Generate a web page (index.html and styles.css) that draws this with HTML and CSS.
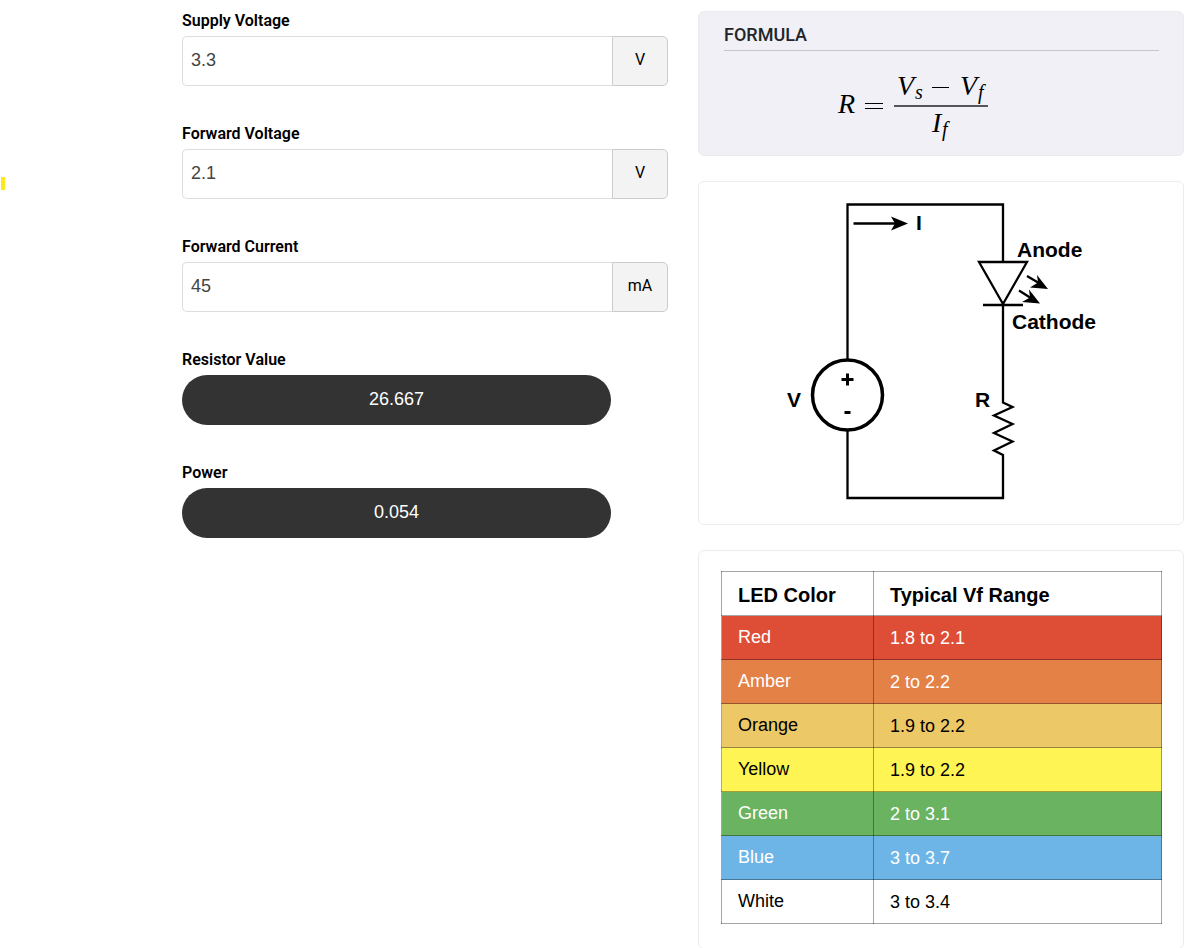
FILE: index.html
```
<!DOCTYPE html>
<html lang="en">
<head>
<meta charset="utf-8">
<title>LED Resistor Calculator</title>
<link rel="stylesheet" href="styles.css">
</head>
<body>
<main class="page">
  <aside class="margin"><span class="marker"></span></aside>
  <form class="calculator">
    <div class="field">
      <label class="label" for="supply">Supply Voltage</label>
      <div class="group"><input class="input" id="supply" type="text" value="3.3"><span class="unit">V</span></div>
    </div>
    <div class="field">
      <label class="label" for="forward">Forward Voltage</label>
      <div class="group"><input class="input" id="forward" type="text" value="2.1"><span class="unit">V</span></div>
    </div>
    <div class="field">
      <label class="label" for="current">Forward Current</label>
      <div class="group"><input class="input" id="current" type="text" value="45"><span class="unit">mA</span></div>
    </div>
    <div class="field">
      <label class="label" for="resistor">Resistor Value</label>
      <input class="result" id="resistor" type="text" value="26.667" readonly>
    </div>
    <div class="field">
      <label class="label" for="power">Power</label>
      <input class="result" id="power" type="text" value="0.054" readonly>
    </div>
  </form>
  <div class="reference">
    <section class="card formula">
      <h2 class="heading">FORMULA</h2>
      <svg class="equation" viewBox="0 0 160 80" width="160" height="80" role="img" aria-label="R equals Vs minus Vf over If">
        <g class="symbol">
          <text x="8" y="51">R</text>
          <text x="67" y="33">V</text>
          <text x="130" y="33">V</text>
          <text x="102" y="70">I</text>
        </g>
        <g class="subscript">
          <text x="85" y="37">s</text>
          <text x="148" y="37">f</text>
          <text x="112" y="74">f</text>
        </g>
        <path d="M35 41.500h18M35 46.500h18M102 25.500h17" stroke="#000" stroke-width="1.200"/>
        <path d="M64 44h94" stroke="#55555c" stroke-width="2"/>
      </svg>
    </section>
    <section class="card circuit">
      <svg class="diagram" viewBox="0 1 484 342" width="484" height="342" role="img" aria-label="LED circuit with supply and series resistor">
        <g fill="none" stroke="#000" stroke-width="2.300">
          <path d="M148.500 178V23.500H304V81M304 124V221.500L313.500 226L295 234.500L313.500 243L295 252L313.500 260.500L295 269.500L304 274V317H148.500V250"/>
          <path d="M280 81H328L304 123ZM284 124H324"/>
          <path d="M154.500 42.500H197M328 95L339 101.500M320 109.500L331 116.500"/>
          <circle cx="148.500" cy="214" r="35" stroke-width="3.500"/>
        </g>
        <path d="M209 42.500L192 35.500L196 42.500L192 49.500ZM349 108L338 94L339 101.500L331 106.500ZM341 122.500L330 108.500L331 116.500L323 121Z"/>
        <path d="M142.500 196.900h12v3h-12zM147 192.400h3v12h-3zM145.500 230h6v3h-6z"/>
        <g class="legend">
          <text x="217" y="49">I</text>
          <text x="318" y="76">Anode</text>
          <text x="313" y="148">Cathode</text>
          <text x="88" y="226">V</text>
          <text x="276" y="226">R</text>
        </g>
      </svg>
    </section>
    <section class="card chart">
      <table class="colors">
        <thead><tr><th>LED Color</th><th>Typical Vf Range</th></tr></thead>
        <tbody>
          <tr class="red"><td>Red</td><td>1.8 to 2.1</td></tr>
          <tr class="amber"><td>Amber</td><td>2 to 2.2</td></tr>
          <tr class="orange"><td>Orange</td><td>1.9 to 2.2</td></tr>
          <tr class="yellow"><td>Yellow</td><td>1.9 to 2.2</td></tr>
          <tr class="green"><td>Green</td><td>2 to 3.1</td></tr>
          <tr class="blue"><td>Blue</td><td>3 to 3.7</td></tr>
          <tr><td>White</td><td>3 to 3.4</td></tr>
        </tbody>
      </table>
    </section>
  </div>
</main>
</body>
</html>
```
FILE: styles.css
```
* { box-sizing: border-box; }

body {
  margin: 0;
  background: #fff;
  color: #000;
  font-family: Roboto, "Liberation Sans", sans-serif;
}

.page {
  display: grid;
  grid-template-columns: 152px minmax(0, 1fr) minmax(0, 1fr);
  column-gap: 30px;
}

.margin { padding: 177px 0 0 1px; }

.marker {
  display: block;
  width: 4px;
  height: 13px;
  background: #fbe91c;
}

.calculator {
  display: flex;
  flex-direction: column;
  gap: 35px;
  padding-top: 8px;
}

.field {
  display: flex;
  flex-direction: column;
  gap: 3px;
}

.label {
  font-size: 16px;
  font-weight: 600;
  line-height: 25px;
}

.group { display: flex; height: 50px; }

.input {
  flex: 1;
  min-width: 0;
  padding: 0 8px 2px;
  border: 1px solid #ddd;
  border-right: 0;
  border-radius: 5px 0 0 5px;
  color: #444;
  font-family: "Liberation Sans", Arial, sans-serif;
  font-size: 18px;
}

.unit {
  width: 56px;
  border: 1px solid #ccc;
  border-radius: 0 5px 5px 0;
  background: #f3f3f3;
  font-size: 16px;
  line-height: 46px;
  text-align: center;
}

.result {
  height: 50px;
  margin-right: 57px;
  padding: 0 0 2px;
  border: 0;
  border-radius: 25px;
  background: #333;
  color: #fff;
  font-family: "Liberation Sans", Arial, sans-serif;
  font-size: 18px;
  text-align: center;
}

.reference {
  display: flex;
  flex-direction: column;
  gap: 25px;
  padding-top: 11px;
}

.card {
  border: 1px solid #ececee;
  border-radius: 6px;
}

.formula {
  padding: 10px 24px 9px 25px;
  background: #f0f0f6;
}

.heading {
  margin: 0;
  padding-bottom: 2px;
  border-bottom: 1px solid #c6c6ce;
  color: #212529;
  font-size: 18px;
  font-weight: 500;
  line-height: 26px;
}

.equation {
  display: block;
  margin: 11px auto 4px 106px;
}

.symbol, .subscript {
  font-family: "Liberation Serif", serif;
  font-style: italic;
}

.symbol { font-size: 28px; }
.subscript { font-size: 20px; }

.diagram {
  display: block;
  width: 100%;
  height: auto;
}

.legend {
  font-family: "Liberation Sans", Arial, sans-serif;
  font-size: 21px;
  font-weight: 700;
}

.chart { padding: 20px 21px 24px 22px; }

.colors {
  width: 100%;
  border-collapse: collapse;
  table-layout: fixed;
  font-family: "Liberation Sans", Arial, sans-serif;
  font-size: 18px;
}

.colors th, .colors td {
  height: 44px;
  padding: 2px 16px 0;
  border: 1px solid rgba(0, 0, 0, 0.35);
  text-align: left;
}

.colors th { padding-top: 4px; font-size: 20px; }
.colors th:first-child { width: 152px; }
.colors td:first-child { padding: 0 16px 1px; }

.red { background: #de4e36; color: #fff; }
.amber { background: #e38146; color: #fff; }
.orange { background: #edc866; }
.yellow { background: #fef453; }
.green { background: #6ab361; color: #fff; }
.blue { background: #6eb5e7; color: #fff; }
```
